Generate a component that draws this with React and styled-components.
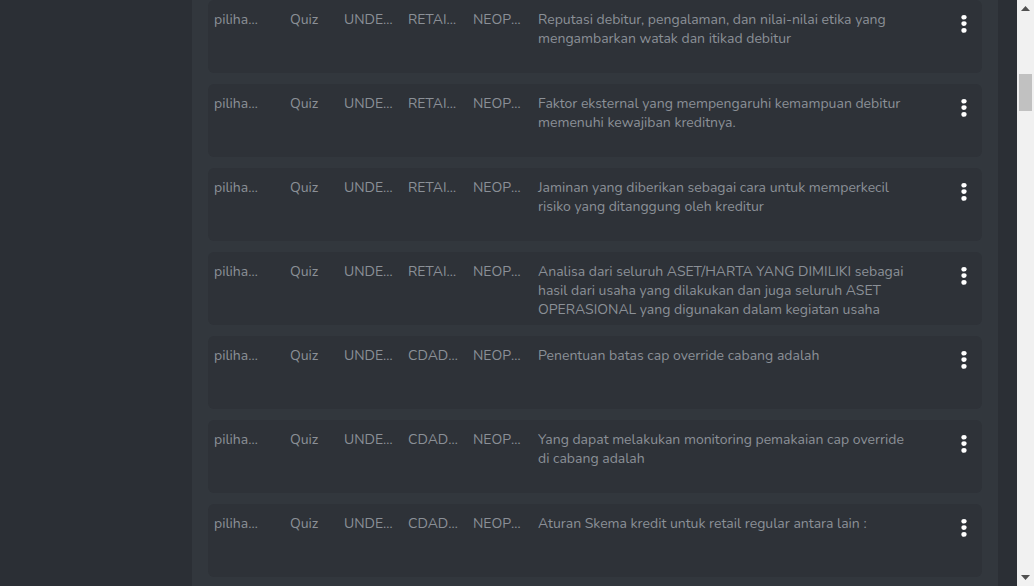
import styled, { createGlobalStyle } from "styled-components";

const GlobalStyle = createGlobalStyle`
  html, body {
    margin: 0;
    padding: 0;
    height: 100%;
    overflow: hidden;
  }
  body {
    background: #2b2f35;
    font-family: "Nunito", "Lato", "Open Sans", sans-serif;
  }
`;

const Page = styled.div`
  display: flex;
  height: 586px;
  overflow: hidden;
`;

const Viewport = styled.div`
  flex: 1;
  display: grid;
  grid-template-columns: 192px 806px 1fr;
  background: #2b2f35;
`;

const Sidebar = styled.aside`
  background: #2b2f35;
`;

const Panel = styled.main`
  background: #32373d;
  padding: 0 16px;
  display: flex;
  flex-direction: column;
  gap: 11px;
`;

const Card = styled.div`
  display: grid;
  grid-template-columns: 76px 54px 64px 65px 65px 1fr 36px;
  align-items: start;
  min-height: 73px;
  box-sizing: border-box;
  padding: 10px 0 0 6px;
  background: #2e3238;
  border-radius: 6px;
  color: #8b9097;
  font-size: 14px;
  line-height: 19px;
`;

const Cell = styled.span`
  display: block;
  max-width: ${(p) => p.$max || 48}px;
  white-space: nowrap;
  overflow: hidden;
  text-overflow: ellipsis;
`;

const Question = styled.p`
  margin: 0;
  max-width: 372px;
`;

const MenuButton = styled.button`
  justify-self: center;
  width: 24px;
  height: 22px;
  margin-top: 3px;
  padding: 0;
  background: none;
  border: none;
  color: #ffffff;
  display: flex;
  align-items: center;
  justify-content: center;
  cursor: pointer;
`;

const ScrollTrack = styled.div`
  width: 17px;
  flex: none;
  background: #f1f1f1;
  display: flex;
  flex-direction: column;
  align-items: center;
`;

const ArrowBox = styled.div`
  height: 17px;
  width: 17px;
  display: flex;
  align-items: center;
  justify-content: center;
`;

const ThumbZone = styled.div`
  flex: 1;
  width: 100%;
  padding: 57px 2px 0;
  box-sizing: border-box;
`;

const Thumb = styled.div`
  height: 37px;
  background: #c1c1c1;
`;

function DotsIcon() {
  return (
    <svg width="8" height="20" viewBox="0 0 8 20">
      <ellipse cx="4" cy="3.2" rx="2.6" ry="2.3" fill="currentColor" />
      <ellipse cx="4" cy="9.6" rx="2.6" ry="2.3" fill="currentColor" />
      <ellipse cx="4" cy="16.4" rx="2.6" ry="2.3" fill="currentColor" />
    </svg>
  );
}

function Arrow({ down }) {
  return (
    <svg width="9" height="5" viewBox="0 0 9 5">
      <polygon
        points={down ? "0,0 9,0 4.5,5" : "0,5 9,5 4.5,0"}
        fill="#505050"
      />
    </svg>
  );
}

const rows = [
  {
    cat: "RETAIL BANKING",
    text: "Reputasi debitur, pengalaman, dan nilai-nilai etika yang mengambarkan watak dan itikad debitur",
  },
  {
    cat: "RETAIL BANKING",
    text: "Faktor eksternal yang mempengaruhi kemampuan debitur memenuhi kewajiban kreditnya.",
  },
  {
    cat: "RETAIL BANKING",
    text: "Jaminan yang diberikan sebagai cara untuk memperkecil risiko yang ditanggung oleh kreditur",
  },
  {
    cat: "RETAIL BANKING",
    text: "Analisa dari seluruh ASET/HARTA YANG DIMILIKI sebagai hasil dari usaha yang dilakukan dan juga seluruh ASET OPERASIONAL yang digunakan dalam kegiatan usaha",
  },
  { cat: "CDADS SME", text: "Penentuan batas cap override cabang adalah" },
  {
    cat: "CDADS SME",
    text: "Yang dapat melakukan monitoring pemakaian cap override di cabang adalah",
  },
  { cat: "CDADS SME", text: "Aturan Skema kredit untuk retail regular antara lain :" },
];

export default function App() {
  return (
    <>
      <GlobalStyle />
      <Page>
        <Viewport>
          <Sidebar />
          <Panel>
            {rows.map((row, i) => (
              <Card key={i}>
                <Cell>pilihan ganda</Cell>
                <Cell>Quiz</Cell>
                <Cell $max={52}>UNDERWRITING</Cell>
                <Cell $max={52}>{row.cat}</Cell>
                <Cell>NEOPHYTE</Cell>
                <Question>{row.text}</Question>
                <MenuButton aria-label="menu">
                  <DotsIcon />
                </MenuButton>
              </Card>
            ))}
          </Panel>
          <Sidebar />
        </Viewport>
        <ScrollTrack>
          <ArrowBox>
            <Arrow />
          </ArrowBox>
          <ThumbZone>
            <Thumb />
          </ThumbZone>
          <ArrowBox>
            <Arrow down />
          </ArrowBox>
        </ScrollTrack>
      </Page>
    </>
  );
}
